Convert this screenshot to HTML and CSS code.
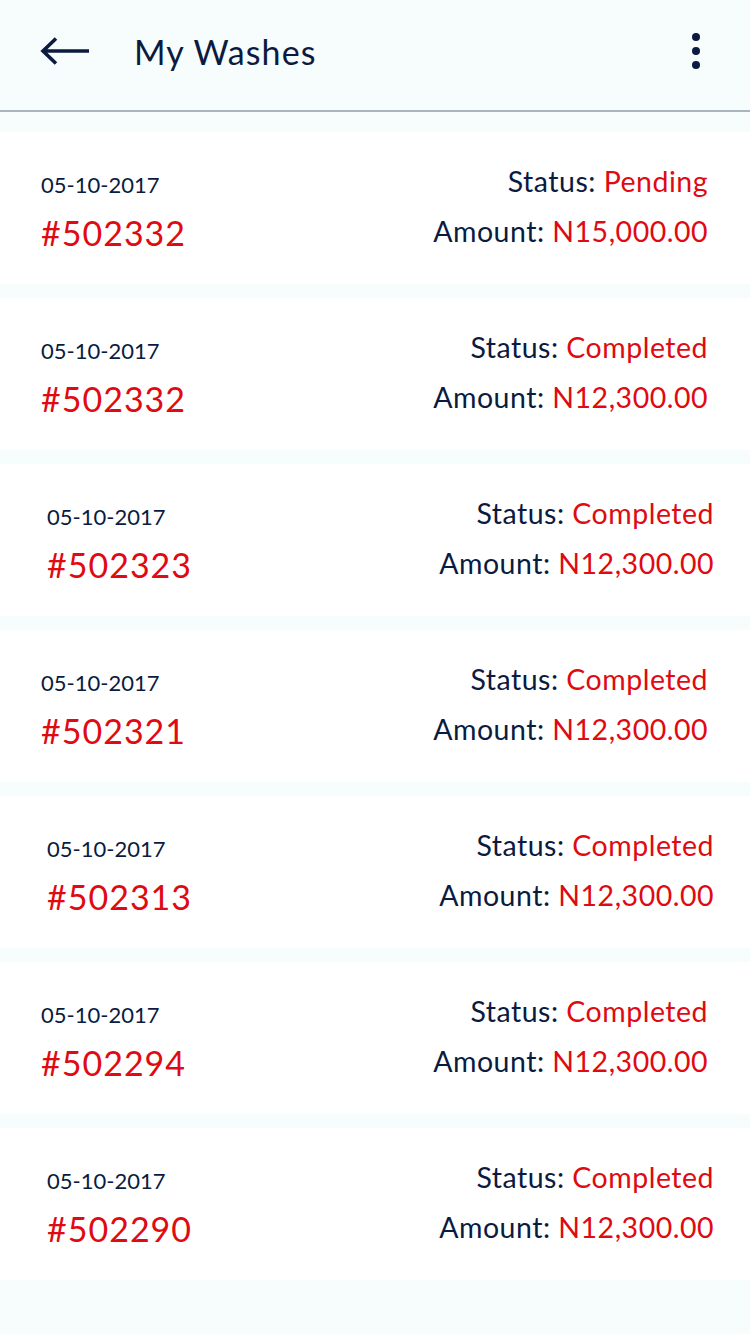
FILE: index.html
```html
<!DOCTYPE html>
<html lang="en">
<head>
<meta charset="utf-8">
<title>My Washes</title>
<link rel="stylesheet" href="styles.css">
</head>
<body>
<header class="topbar">
  <button class="back" aria-label="Back">
    <svg width="50" height="30" viewBox="0 0 50 30"><path d="M3 15 H49 M16 2.5 L3 15 L16 27.5" fill="none" stroke="#0b1b3f" stroke-width="3.6" stroke-linecap="butt" stroke-linejoin="miter"/></svg>
  </button>
  <h1 class="title">My Washes</h1>
  <button class="more" aria-label="More">
    <span class="dot"></span><span class="dot"></span><span class="dot"></span>
  </button>
</header>
<main class="list">
  <div class="card">
    <div class="left"><div class="date">05-10-2017</div><div class="id">#502332</div></div>
    <div class="right"><div class="row">Status: <span class="red">Pending</span></div><div class="row">Amount: <span class="red">N15,000.00</span></div></div>
  </div>
  <div class="card">
    <div class="left"><div class="date">05-10-2017</div><div class="id">#502332</div></div>
    <div class="right"><div class="row">Status: <span class="red">Completed</span></div><div class="row">Amount: <span class="red">N12,300.00</span></div></div>
  </div>
  <div class="card shifted">
    <div class="left"><div class="date">05-10-2017</div><div class="id">#502323</div></div>
    <div class="right"><div class="row">Status: <span class="red">Completed</span></div><div class="row">Amount: <span class="red">N12,300.00</span></div></div>
  </div>
  <div class="card">
    <div class="left"><div class="date">05-10-2017</div><div class="id">#502321</div></div>
    <div class="right"><div class="row">Status: <span class="red">Completed</span></div><div class="row">Amount: <span class="red">N12,300.00</span></div></div>
  </div>
  <div class="card shifted">
    <div class="left"><div class="date">05-10-2017</div><div class="id">#502313</div></div>
    <div class="right"><div class="row">Status: <span class="red">Completed</span></div><div class="row">Amount: <span class="red">N12,300.00</span></div></div>
  </div>
  <div class="card">
    <div class="left"><div class="date">05-10-2017</div><div class="id">#502294</div></div>
    <div class="right"><div class="row">Status: <span class="red">Completed</span></div><div class="row">Amount: <span class="red">N12,300.00</span></div></div>
  </div>
  <div class="card shifted">
    <div class="left"><div class="date">05-10-2017</div><div class="id">#502290</div></div>
    <div class="right"><div class="row">Status: <span class="red">Completed</span></div><div class="row">Amount: <span class="red">N12,300.00</span></div></div>
  </div>
</main>
</body>
</html>
```
FILE: styles.css
```css
* { box-sizing: border-box; }
html, body { margin: 0; padding: 0; }
body {
  background: #f7fcfd;
  font-family: Lato, "Open Sans", sans-serif;
  color: #0b1b3f;
  width: 750px;
  min-height: 1334px;
}
.topbar {
  height: 112px;
  display: flex;
  align-items: center;
  padding: 0 0 8px 0;
  border-bottom: 2px solid #a9b4c0;
  background: #f7fcfd;
}
.back {
  border: 0;
  background: none;
  padding: 0;
  margin-left: 40px;
  width: 50px;
  height: 30px;
  display: flex;
}
.title {
  margin: 0 0 0 44px;
  font-size: 34px;
  font-weight: 400;
  letter-spacing: 1.1px;
  flex: 1;
}
.more {
  border: 0;
  background: none;
  padding: 0;
  margin-right: 50px;
  display: flex;
  flex-direction: column;
  gap: 6px;
}
.dot {
  width: 8px;
  height: 8px;
  border-radius: 50%;
  background: #0b1b3f;
}
.list {
  padding-top: 20px;
  display: flex;
  flex-direction: column;
  gap: 14px;
}
.card {
  height: 152px;
  background: #ffffff;
  display: flex;
  justify-content: space-between;
  padding: 0 42px 0 41px;
}
.card.shifted { padding: 0 36px 0 47px; }
.left { padding-top: 38px; }
.date { font-size: 22px; line-height: 30px; }
.id { font-size: 34px; line-height: 50px; margin-top: 8px; color: #df0a12; letter-spacing: 1px; }
.right { padding-top: 24px; text-align: right; }
.row { font-size: 28.5px; line-height: 50px; letter-spacing: 0.5px; }
.red { color: #df0a12; }
```
